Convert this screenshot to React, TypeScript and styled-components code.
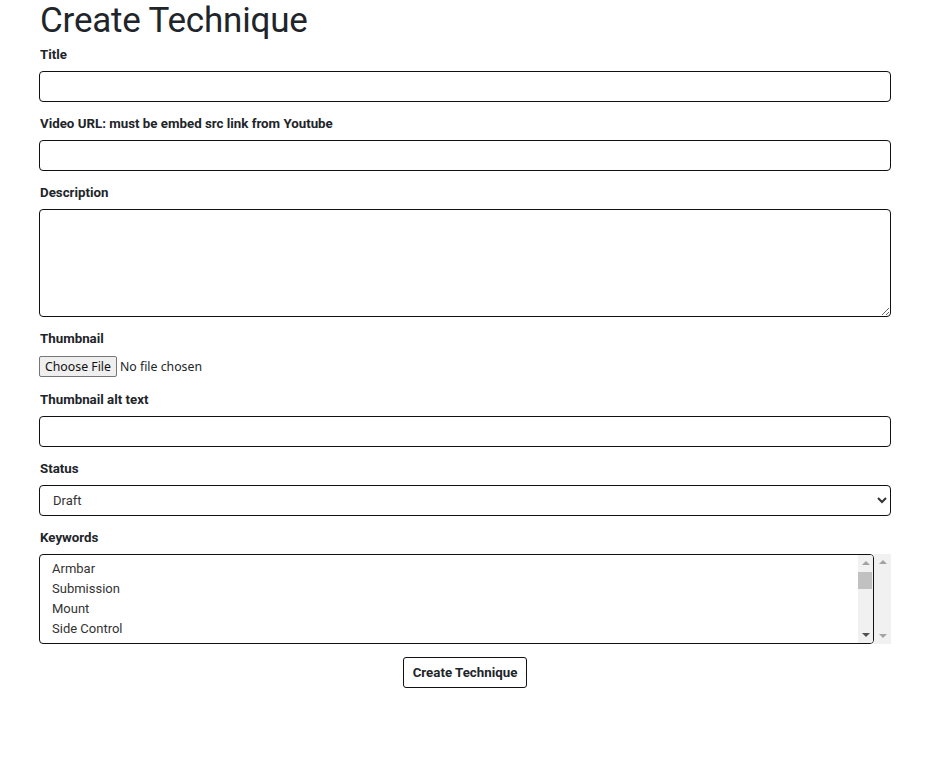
import React from "react";
import styled, { createGlobalStyle } from "styled-components";

const GlobalStyle = createGlobalStyle`
  html, body { margin: 0; padding: 0; background: #ffffff; }
  body { font-family: Roboto, "Noto Sans", sans-serif; color: #212529; }
`;

const Page = styled.div`
  width: 852px;
  padding: 0 0 0 39px;
`;

const Heading = styled.h1`
  margin: 0 0 3px 1px;
  font-family: Roboto, "Noto Sans", sans-serif;
  font-weight: 400;
  font-size: 35px;
  line-height: 42px;
  color: #212529;
  letter-spacing: -0.2px;
`;

const Form = styled.form`
  display: flex;
  flex-direction: column;
`;

const Field = styled.div`
  display: flex;
  flex-direction: column;
  gap: 6px;
  margin-bottom: 12px;
`;

const Label = styled.label`
  font-family: Roboto, "Noto Sans", sans-serif;
  font-weight: 700;
  font-size: 13.3px;
  line-height: 20px;
  color: #212529;
  padding-left: 1px;
`;

const TextInput = styled.input`
  box-sizing: border-box;
  width: 100%;
  height: 31px;
  border: 1px solid #111;
  border-radius: 4px;
  padding: 0 12px;
  font-family: Roboto, sans-serif;
  font-size: 13px;
  background: #fff;
`;

const TextArea = styled.textarea`
  box-sizing: border-box;
  width: 100%;
  height: 108px;
  border: 1px solid #111;
  border-radius: 4px;
  padding: 6px 12px;
  font-family: Roboto, sans-serif;
  font-size: 13px;
  display: block;
`;

const FileInput = styled.input`
  font-family: "Noto Sans", "Open Sans", sans-serif;
  font-size: 12.3px;
  color: #212529;
  height: 22px;
  margin-top: 1px;
  &::file-selector-button {
    font-family: "Noto Sans", "Open Sans", sans-serif;
    font-size: 12.3px;
    background: #efefef;
    border: 1px solid #767676;
    border-radius: 2px;
    padding: 1px 5px;
    margin-right: 3px;
    color: #111;
  }
`;

const Select = styled.select`
  box-sizing: border-box;
  width: 100%;
  height: 31px;
  border: 1px solid #111;
  border-radius: 4px;
  padding: 0 9px;
  font-family: Roboto, sans-serif;
  font-size: 13px;
  color: #333;
  background: #fff;
`;

const ListWrap = styled.div`
  display: flex;
  height: 90px;
`;

const ListBox = styled.div`
  flex: 1;
  display: flex;
  border: 1px solid #111;
  border-radius: 4px;
  overflow: hidden;
  background: #fff;
`;

const OptionList = styled.ul`
  flex: 1;
  list-style: none;
  margin: 0;
  padding: 4px 0 0 0;
`;

const OptionItem = styled.li`
  padding: 0 12px;
  font-family: Roboto, sans-serif;
  font-size: 13px;
  line-height: 20px;
  color: #333;
  cursor: default;
`;

const ScrollBar = styled.div<{ $width: number }>`
  width: ${(p) => p.$width}px;
  flex: none;
  display: flex;
  flex-direction: column;
  background: #f1f1f1;
`;

const ArrowButton = styled.div<{ $dir: "up" | "down"; $active: boolean }>`
  height: 16px;
  display: flex;
  align-items: center;
  justify-content: center;
  &::before {
    content: "";
    width: 0;
    height: 0;
    border-left: 4px solid transparent;
    border-right: 4px solid transparent;
    ${(p) =>
      p.$dir === "up"
        ? `border-bottom: 4px solid ${p.$active ? "#505050" : "#a3a3a3"};`
        : `border-top: 4px solid ${p.$active ? "#505050" : "#a3a3a3"};`}
  }
`;

const Track = styled.div`
  flex: 1;
  display: flex;
  flex-direction: column;
  padding: 1px 1px 0 0;
`;

const Thumb = styled.div`
  height: 17px;
  background: #c1c1c1;
`;

const ButtonRow = styled.div`
  display: flex;
  justify-content: center;
  margin-top: 1px;
`;

const SubmitButton = styled.button`
  height: 31px;
  padding: 0 9px;
  background: #fff;
  border: 1px solid #111;
  border-radius: 3px;
  font-family: Roboto, sans-serif;
  font-weight: 700;
  font-size: 13.3px;
  color: #212529;
  cursor: pointer;
`;

const keywords = ["Armbar", "Submission", "Mount", "Side Control"];

export default function App() {
  return (
    <Page>
      <GlobalStyle />
      <Heading>Create Technique</Heading>
      <Form onSubmit={(e) => e.preventDefault()}>
        <Field>
          <Label htmlFor="title">Title</Label>
          <TextInput id="title" type="text" />
        </Field>
        <Field>
          <Label htmlFor="video">Video URL: must be embed src link from Youtube</Label>
          <TextInput id="video" type="text" />
        </Field>
        <Field>
          <Label htmlFor="desc">Description</Label>
          <TextArea id="desc" />
        </Field>
        <Field>
          <Label htmlFor="thumb">Thumbnail</Label>
          <FileInput id="thumb" type="file" />
        </Field>
        <Field>
          <Label htmlFor="alt">Thumbnail alt text</Label>
          <TextInput id="alt" type="text" />
        </Field>
        <Field>
          <Label htmlFor="status">Status</Label>
          <Select id="status" defaultValue="draft">
            <option value="draft">Draft</option>
            <option value="published">Published</option>
          </Select>
        </Field>
        <Field>
          <Label>Keywords</Label>
          <ListWrap>
            <ListBox role="listbox" aria-multiselectable="true">
              <OptionList>
                {keywords.map((k) => (
                  <OptionItem key={k} role="option">
                    {k}
                  </OptionItem>
                ))}
              </OptionList>
              <ScrollBar $width={15}>
                <ArrowButton $dir="up" $active={false} />
                <Track>
                  <Thumb />
                </Track>
                <ArrowButton $dir="down" $active={true} />
              </ScrollBar>
            </ListBox>
            <ScrollBar $width={17}>
              <ArrowButton $dir="up" $active={false} />
              <Track />
              <ArrowButton $dir="down" $active={false} />
            </ScrollBar>
          </ListWrap>
        </Field>
        <ButtonRow>
          <SubmitButton type="submit">Create Technique</SubmitButton>
        </ButtonRow>
      </Form>
    </Page>
  );
}
